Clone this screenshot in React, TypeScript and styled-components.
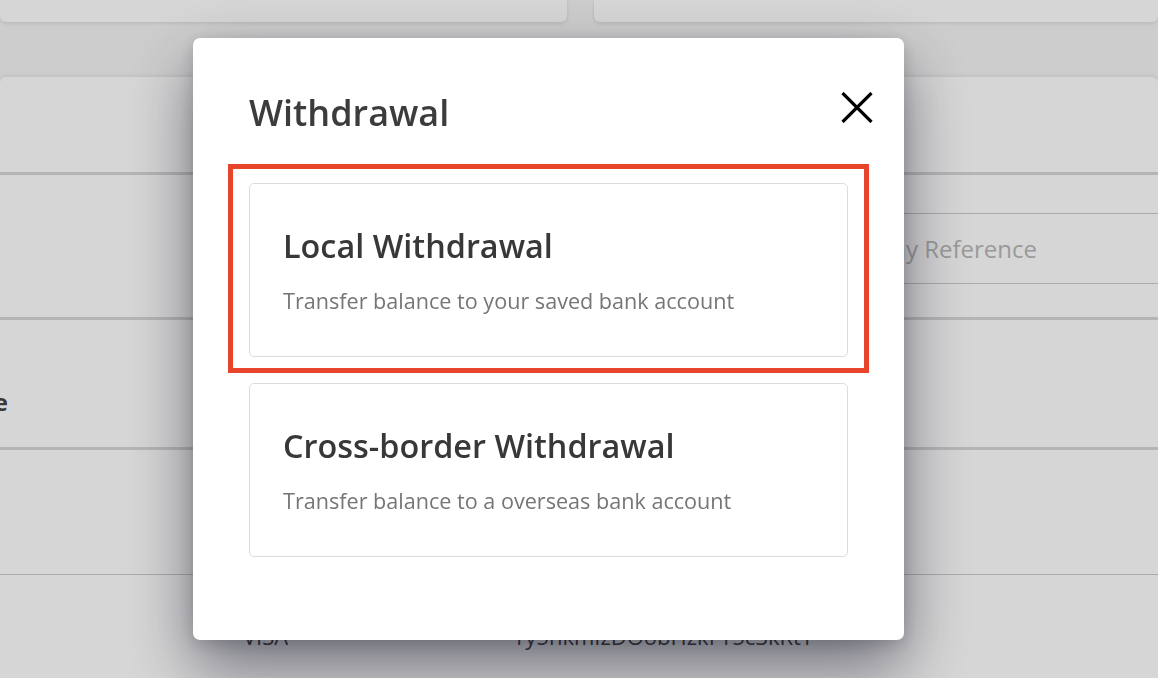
import React from 'react'
import styled, { createGlobalStyle } from 'styled-components'

const GlobalStyle = createGlobalStyle`
  html, body {
    margin: 0;
    padding: 0;
    height: 100%;
    overflow: hidden;
  }
  body {
    background: #f5f5f5;
    font-family: 'Open Sans', 'Liberation Sans', sans-serif;
    color: #333;
  }
`

const Page = styled.div`
  width: 1158px;
  height: 678px;
  overflow: hidden;
  display: flex;
  flex-direction: column;
`

const TopCards = styled.div`
  display: grid;
  grid-template-columns: 567px 1fr;
  gap: 27px;
  height: 22px;
  flex-shrink: 0;
`

const TopCard = styled.div`
  background: #fff;
  border-radius: 0 0 6px 6px;
  box-shadow: 0 1px 4px rgba(0, 0, 0, 0.12);
`

const Panel = styled.div`
  margin-top: 55px;
  flex: 1;
  background: #fff;
  border-radius: 6px 6px 0 0;
  box-shadow: 0 -1px 4px rgba(0, 0, 0, 0.08);
`

const Row = styled.div<{ $h: number; $line?: 'thick' | 'thin' }>`
  height: ${(p) => p.$h}px;
  border-bottom: ${(p) =>
    p.$line === 'thick' ? '3px solid #d8d8d8' : p.$line === 'thin' ? '1px solid #cbcbcb' : 'none'};
`

const FieldWrap = styled.div`
  padding-top: 38px;
  padding-left: 600px;
`

const Field = styled.div`
  height: 69px;
  border-top: 1px solid #cbcbcb;
  border-bottom: 1px solid #cbcbcb;
  display: flex;
  align-items: center;
  justify-content: flex-end;
  padding-right: 121px;
  font-size: 24px;
  color: #b8b8b8;
`

const LabelRow = styled.div`
  height: 100%;
  display: flex;
  align-items: center;
  padding-top: 36px;
  box-sizing: border-box;
`

const CutLabel = styled.div`
  width: 8px;
  display: flex;
  justify-content: flex-end;
  white-space: nowrap;
  font-size: 24px;
  font-weight: 700;
  color: #444;
`

const CardRow = styled.div`
  display: grid;
  grid-template-columns: 270px 1fr;
  padding: 46px 0 0 243px;
  font-size: 22px;
  color: #444;
`

const Overlay = styled.div`
  position: fixed;
  inset: 0;
  background: rgba(0, 0, 0, 0.16);
  display: flex;
  align-items: center;
  justify-content: center;
  padding-right: 61px;
`

const Modal = styled.div`
  width: 711px;
  height: 602px;
  box-sizing: border-box;
  padding: 0 56px;
  background: #fff;
  border-radius: 7px;
  box-shadow: 0 28px 64px rgba(20, 20, 40, 0.52), 0 4px 16px rgba(0, 0, 0, 0.16);
  display: flex;
  flex-direction: column;
`

const Header = styled.div`
  margin-top: 53px;
  height: 44px;
  display: flex;
  align-items: center;
  justify-content: space-between;
`

const Title = styled.h2`
  margin: 0;
  font-size: 36px;
  line-height: 44px;
  font-weight: 600;
  color: #3c3c3c;
`

const CloseButton = styled.button`
  border: 0;
  background: none;
  padding: 0;
  width: 32px;
  height: 31px;
  margin-right: -25px;
  margin-top: -11px;
  cursor: pointer;
  display: block;
`

const Options = styled.div`
  margin-top: 48px;
  display: flex;
  flex-direction: column;
  gap: 26px;
`

const Highlight = styled.div`
  border: 5px solid #e8432b;
  padding: 14px 16px 11px 16px;
  margin: -19px -21px -16px -21px;
`

const OptionCard = styled.div`
  height: 174px;
  box-sizing: border-box;
  border: 1px solid #dcdcdc;
  border-radius: 5px;
  padding: 41px 33px 0;
  cursor: pointer;
`

const OptionTitle = styled.div`
  font-size: 32.4px;
  line-height: 40px;
  font-weight: 600;
  color: #383838;
`

const OptionText = styled.div`
  margin-top: 22px;
  font-size: 21.6px;
  line-height: 28px;
  color: #767676;
`

const CloseIcon = () => (
  <svg width="32" height="31" viewBox="0 0 32 31">
    <path d="M1.5 1 L30.5 30 M30.5 1 L1.5 30" stroke="#000" strokeWidth="3.2" />
  </svg>
)

export default function App() {
  return (
    <>
      <GlobalStyle />
      <Page>
        <TopCards>
          <TopCard />
          <TopCard />
        </TopCards>
        <Panel>
          <Row $h={95} $line="thick" />
          <Row $h={142} $line="thick">
            <FieldWrap>
              <Field>Company Reference</Field>
            </FieldWrap>
          </Row>
          <Row $h={127} $line="thick">
            <LabelRow>
              <CutLabel>Available Balance</CutLabel>
            </LabelRow>
          </Row>
          <Row $h={124} $line="thin" />
          <CardRow>
            <span>VISA</span>
            <span>Yy5hkmIzDOobHzkFY5c3kRtY</span>
          </CardRow>
        </Panel>
      </Page>
      <Overlay>
        <Modal>
          <Header>
            <Title>Withdrawal</Title>
            <CloseButton aria-label="Close">
              <CloseIcon />
            </CloseButton>
          </Header>
          <Options>
            <Highlight>
              <OptionCard>
                <OptionTitle>Local Withdrawal</OptionTitle>
                <OptionText>Transfer balance to your saved bank account</OptionText>
              </OptionCard>
            </Highlight>
            <OptionCard>
              <OptionTitle>Cross-border Withdrawal</OptionTitle>
              <OptionText>Transfer balance to a overseas bank account</OptionText>
            </OptionCard>
          </Options>
        </Modal>
      </Overlay>
    </>
  )
}
